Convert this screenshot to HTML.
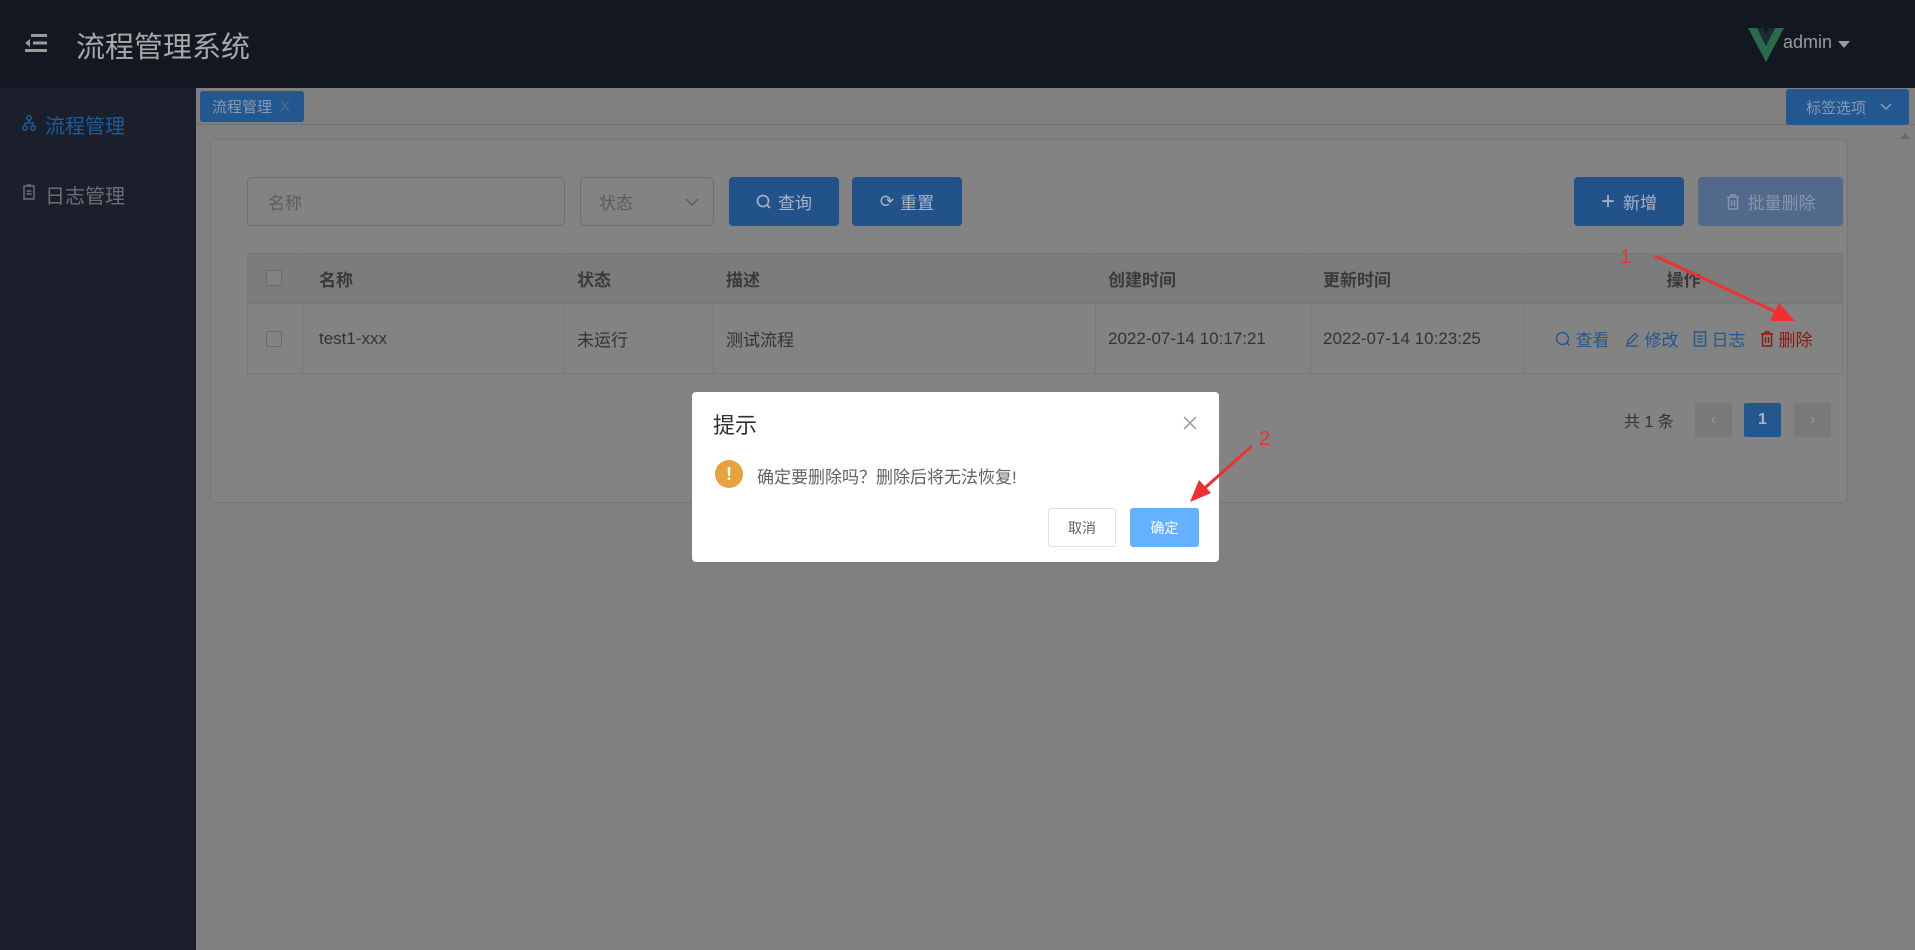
<!DOCTYPE html>
<html><head><meta charset="utf-8"><style>
*{box-sizing:border-box;margin:0;padding:0}
body{width:1915px;height:950px;overflow:hidden;background:#808080;font-family:"Liberation Sans","Noto Sans CJK SC",sans-serif;position:relative;color:#303030}
.a{position:absolute}
.hdr{left:0;top:0;width:1915px;height:88px;background:#131722}
.side{left:0;top:88px;width:196px;height:862px;background:#1a1f2b}
.card{left:210px;top:139px;width:1638px;height:364px;background:#838383;border:1px solid #767676;border-radius:5px}
.inp{border:1px solid #6e6e6e;border-radius:5px;background:#838383;color:#5c5c5c;font-size:17px;display:flex;align-items:center;padding-left:20px}
.btn{border-radius:4px;color:#a9b5c6;font-size:17px;display:flex;align-items:center;justify-content:center;background:#22528a}
.cell{position:absolute;display:flex;align-items:center;font-size:17px;color:#333;border-right:1px solid #787878;padding-left:12px}
.th{color:#3a3a3a;font-weight:bold}
.line{background:#787878}
.op{display:flex;align-items:center;gap:5px}
</style></head><body>
<div class="a hdr"></div>
<svg class="a" style="left:25px;top:33px" width="22" height="20" viewBox="0 0 22 20"><rect x="6" y="1" width="16" height="3" fill="#9a9a9a"/><rect x="8" y="8.5" width="14" height="3" fill="#9a9a9a"/><rect x="0" y="16" width="22" height="3" fill="#9a9a9a"/><path d="M0 10 L5 6 L5 14Z" fill="#9a9a9a"/></svg>
<div class="a" style="left:76px;top:24px;font-size:29px;color:#a8a8a8">流程管理系统</div>
<svg class="a" style="left:1748px;top:28px" width="36" height="34" viewBox="0 0 36 34"><path d="M0 0 L9 0 L18 18 L27 0 L36 0 L18 34Z" fill="#2a6a4a"/><path d="M9 0 L15 0 L18 6 L21 0 L27 0 L18 18Z" fill="#1d2a35"/></svg>
<div class="a" style="left:1783px;top:32px;font-size:18px;color:#9a9a9a">admin</div>
<div class="a" style="left:1838px;top:41px;width:0;height:0;border-left:6px solid transparent;border-right:6px solid transparent;border-top:7px solid #9a9a9a"></div>
<div class="a side"></div>
<svg class="a" style="left:22px;top:115px" width="14" height="16" viewBox="0 0 14 16"><circle cx="7" cy="3" r="2.2" fill="none" stroke="#1d5c9a" stroke-width="1.5"/><circle cx="3" cy="13" r="2.2" fill="none" stroke="#1d5c9a" stroke-width="1.5"/><circle cx="11" cy="13" r="2.2" fill="none" stroke="#1d5c9a" stroke-width="1.5"/><path d="M7 5 V8 M3 11 V8 H11 V11" stroke="#1d5c9a" stroke-width="1.5" fill="none"/></svg>
<div class="a" style="left:45px;top:110px;font-size:20px;color:#1d5c9a">流程管理</div>
<svg class="a" style="left:23px;top:184px" width="12" height="16" viewBox="0 0 12 16"><rect x="1" y="2" width="10" height="13" fill="none" stroke="#6a6e76" stroke-width="1.5"/><path d="M4 1 H8 M3.5 7 H8.5 M3.5 10 H8.5" stroke="#6a6e76" stroke-width="1.5"/></svg>
<div class="a" style="left:45px;top:180px;font-size:20px;color:#6a6e76">日志管理</div>
<div class="a" style="left:196px;top:88px;width:1719px;height:37px;background:#7f7f7f;border-bottom:1px solid #6e6e6e"></div>
<div class="a" style="left:200px;top:91px;width:104px;height:31px;background:#22578f;border-radius:3px;font-size:15px;color:#8a9ab0;display:flex;align-items:center;padding-left:12px">流程管理 <span style="margin-left:8px;color:#5a6e88">X</span></div>
<div class="a" style="left:1786px;top:89px;width:123px;height:36px;background:#22578f;border-radius:3px;font-size:15px;color:#8a9ab0;display:flex;align-items:center;padding-left:20px">标签选项 <svg style="margin-left:14px" width="12" height="8" viewBox="0 0 12 8"><path d="M1 1 L6 6 L11 1" stroke="#8a9ab0" stroke-width="1.5" fill="none"/></svg></div>
<div class="a" style="left:1900px;top:133px;width:0;height:0;border-left:5px solid transparent;border-right:5px solid transparent;border-bottom:6px solid #6a6a6a"></div>
<div class="a card"></div>
<div class="a inp" style="left:247px;top:177px;width:318px;height:49px">名称</div>
<div class="a inp" style="left:580px;top:177px;width:134px;height:49px;padding-left:18px">状态<svg style="position:absolute;right:14px" width="14" height="8" viewBox="0 0 14 8"><path d="M1 1 L7 7 L13 1" stroke="#5c5c5c" stroke-width="1.5" fill="none"/></svg></div>
<div class="a btn" style="left:729px;top:177px;width:110px;height:49px"><svg width="16" height="16" viewBox="0 0 16 16" style="margin-right:6px"><circle cx="7" cy="7" r="5.5" fill="none" stroke="#a9b5c6" stroke-width="1.6"/><path d="M11 11 L14 14" stroke="#a9b5c6" stroke-width="1.6"/></svg>查询</div>
<div class="a btn" style="left:852px;top:177px;width:110px;height:49px"><span style="margin-right:6px">&#10227;</span>重置</div>
<div class="a btn" style="left:1574px;top:177px;width:110px;height:49px"><span style="font-size:24px;margin-right:8px;font-weight:300">+</span>新增</div>
<div class="a btn" style="left:1698px;top:177px;width:145px;height:49px;background:#51698a;color:#8796aa"><svg width="14" height="16" viewBox="0 0 14 16" style="margin-right:8px"><path d="M1 3 H13 M5 3 V1 H9 V3 M2.5 3 V15 H11.5 V3 M5.5 6 V12 M8.5 6 V12" stroke="#8796aa" stroke-width="1.5" fill="none"/></svg>批量删除</div>
<div class="a" style="left:247px;top:253px;width:1596px;height:50px;background:#7c7c7c;border:1px solid #787878"></div>
<div class="a" style="left:247px;top:303px;width:1596px;height:71px;border:1px solid #787878;border-top:none"></div>
<div class="a line" style="left:247px;top:303px;width:1596px;height:1px"></div>
<div class="a" style="left:266px;top:270px;width:16px;height:16px;border:1px solid #6a6a6a;border-radius:2px;background:#838383"></div>
<div class="a" style="left:266px;top:331px;width:16px;height:16px;border:1px solid #6a6a6a;border-radius:2px;background:#838383"></div>
<div class="cell th" style="left:302px;top:253px;width:263px;height:50px;border-left:1px solid #787878;padding-left:16px">名称</div>
<div class="cell th" style="left:565px;top:253px;width:149px;height:50px">状态</div>
<div class="cell th" style="left:714px;top:253px;width:382px;height:50px">描述</div>
<div class="cell th" style="left:1096px;top:253px;width:215px;height:50px">创建时间</div>
<div class="cell th" style="left:1311px;top:253px;width:213px;height:50px">更新时间</div>
<div class="cell th" style="left:1524px;top:253px;width:319px;height:50px;justify-content:center;padding:0;border:none">操作</div>
<div class="cell" style="left:302px;top:303px;width:263px;height:71px;border-left:1px solid #787878;padding-left:16px">test1-xxx</div>
<div class="cell" style="left:565px;top:303px;width:149px;height:71px">未运行</div>
<div class="cell" style="left:714px;top:303px;width:382px;height:71px">测试流程</div>
<div class="cell" style="left:1096px;top:303px;width:215px;height:71px">2022-07-14 10:17:21</div>
<div class="cell" style="left:1311px;top:303px;width:213px;height:71px">2022-07-14 10:23:25</div>
<div class="cell" style="left:1524px;top:303px;width:319px;height:71px;justify-content:center;padding:0;border:none;color:#24568f;gap:14px">
<span class="op"><svg width="16" height="16" viewBox="0 0 16 16"><circle cx="7.5" cy="7.5" r="6" fill="none" stroke="#24568f" stroke-width="1.4"/><path d="M11.5 11.5 L14.5 14.5" stroke="#24568f" stroke-width="1.4"/></svg>查看</span>
<span class="op"><svg width="16" height="16" viewBox="0 0 16 16"><path d="M3 13 L4 9.5 L11 2.5 L13.5 5 L6.5 12Z M2 15 H14" stroke="#24568f" stroke-width="1.3" fill="none"/></svg>修改</span>
<span class="op"><svg width="14" height="16" viewBox="0 0 14 16"><rect x="1.5" y="1" width="11" height="14" fill="none" stroke="#24568f" stroke-width="1.4"/><path d="M4 5 H10 M4 8 H10 M4 11 H10" stroke="#24568f" stroke-width="1.3"/></svg>日志</span>
<span class="op" style="color:#8a1a10"><svg width="14" height="16" viewBox="0 0 14 16"><path d="M1 3 H13 M5 3 V1 H9 V3 M2.5 3 V15 H11.5 V3 M5.5 6 V12 M8.5 6 V12" stroke="#8a1a10" stroke-width="1.4" fill="none"/></svg>删除</span></div>
<div class="a" style="left:1624px;top:408px;font-size:16px;color:#333">共 1 条</div>
<div class="a" style="left:1695px;top:403px;width:37px;height:34px;background:#7a7a7a;border-radius:2px;color:#9a9a9a;text-align:center;line-height:34px">&#8249;</div>
<div class="a" style="left:1744px;top:403px;width:37px;height:34px;background:#22578f;border-radius:2px;color:#a9b5c6;text-align:center;line-height:34px;font-weight:bold;font-size:16px">1</div>
<div class="a" style="left:1794px;top:403px;width:37px;height:34px;background:#7a7a7a;border-radius:2px;color:#9a9a9a;text-align:center;line-height:34px">&#8250;</div>
<div class="a" style="left:692px;top:392px;width:527px;height:170px;background:#fff;border-radius:4px"></div>
<div class="a" style="left:713px;top:408px;font-size:22px;color:#303133">提示</div>
<svg class="a" style="left:1183px;top:416px" width="14" height="14" viewBox="0 0 14 14"><path d="M1 1 L13 13 M13 1 L1 13" stroke="#909399" stroke-width="1.4"/></svg>
<div class="a" style="left:715px;top:460px;width:28px;height:28px;border-radius:50%;background:#e6a23c;color:#fff;font-weight:bold;text-align:center;line-height:28px;font-size:18px">!</div>
<div class="a" style="left:757px;top:463px;font-size:17px;color:#606266">确定要删除吗？删除后将无法恢复!</div>
<div class="a" style="left:1048px;top:508px;width:68px;height:39px;border:1px solid #dcdfe6;border-radius:3px;font-size:14px;color:#606266;display:flex;align-items:center;justify-content:center">取消</div>
<div class="a" style="left:1130px;top:508px;width:69px;height:39px;background:#66b1ff;border-radius:3px;font-size:14px;color:#fff;display:flex;align-items:center;justify-content:center">确定</div>
<svg class="a" style="left:0;top:0" width="1915" height="950">
<line x1="1655" y1="256" x2="1785" y2="316" stroke="#f03030" stroke-width="3"/>
<path d="M1795 321 L1770 321 L1779 303Z" fill="#f03030"/>
<line x1="1252" y1="446" x2="1198" y2="494" stroke="#f03030" stroke-width="3"/>
<path d="M1190 502 L1199 480 L1211 493Z" fill="#f03030"/>
<text x="1620" y="263" fill="#f03030" font-size="20" font-family="Liberation Sans">1</text>
<text x="1259" y="445" fill="#f03030" font-size="20" font-family="Liberation Sans">2</text>
</svg>
</body></html>
